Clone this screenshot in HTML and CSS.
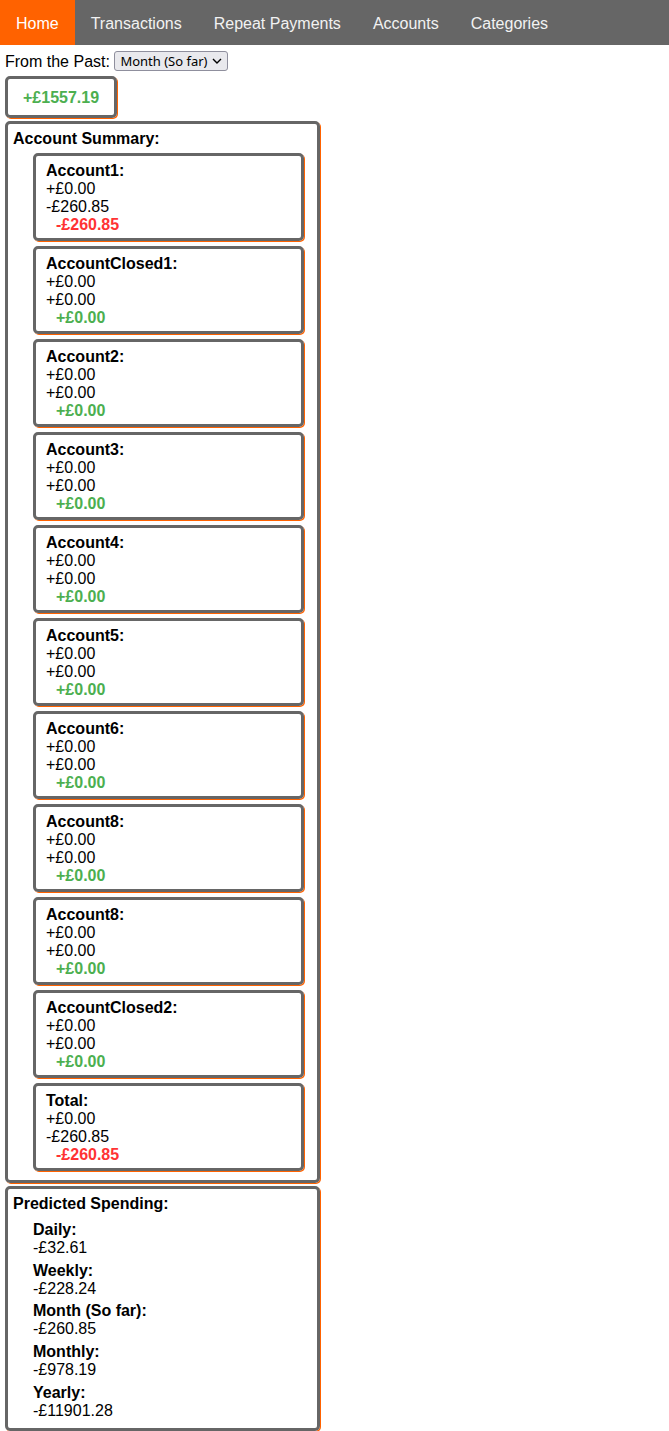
FILE: index.html
```html
<!DOCTYPE html>
<html lang="en">
<head>
<meta charset="utf-8">
<title>Home</title>
<link rel="stylesheet" href="styles.css">
</head>
<body>
<nav class="topnav">
  <a class="nav-item active" href="#">Home</a>
  <a class="nav-item" href="#">Transactions</a>
  <a class="nav-item" href="#">Repeat Payments</a>
  <a class="nav-item" href="#">Accounts</a>
  <a class="nav-item" href="#">Categories</a>
</nav>
<main class="content">
  <div class="filter">From the Past: <span class="select-wrap"><select class="period"><option>Month (So far)</option></select><svg class="chevron" width="10" height="6" viewBox="0 0 10 6"><path d="M1 1l4 4 4-4" fill="none" stroke="#000" stroke-width="1.4"/></svg></span></div>
  <div class="card total-card"><span class="pos">+£1557.19</span></div>

  <section class="card panel">
    <div class="panel-title">Account Summary:</div>
    <ul class="accounts">
      <li class="card account"><div class="name">Account1:</div><div>+£0.00</div><div>-£260.85</div><div class="net neg">-£260.85</div></li>
      <li class="card account"><div class="name">AccountClosed1:</div><div>+£0.00</div><div>+£0.00</div><div class="net pos">+£0.00</div></li>
      <li class="card account"><div class="name">Account2:</div><div>+£0.00</div><div>+£0.00</div><div class="net pos">+£0.00</div></li>
      <li class="card account"><div class="name">Account3:</div><div>+£0.00</div><div>+£0.00</div><div class="net pos">+£0.00</div></li>
      <li class="card account"><div class="name">Account4:</div><div>+£0.00</div><div>+£0.00</div><div class="net pos">+£0.00</div></li>
      <li class="card account"><div class="name">Account5:</div><div>+£0.00</div><div>+£0.00</div><div class="net pos">+£0.00</div></li>
      <li class="card account"><div class="name">Account6:</div><div>+£0.00</div><div>+£0.00</div><div class="net pos">+£0.00</div></li>
      <li class="card account"><div class="name">Account8:</div><div>+£0.00</div><div>+£0.00</div><div class="net pos">+£0.00</div></li>
      <li class="card account"><div class="name">Account8:</div><div>+£0.00</div><div>+£0.00</div><div class="net pos">+£0.00</div></li>
      <li class="card account"><div class="name">AccountClosed2:</div><div>+£0.00</div><div>+£0.00</div><div class="net pos">+£0.00</div></li>
      <li class="card account"><div class="name">Total:</div><div>+£0.00</div><div>-£260.85</div><div class="net neg">-£260.85</div></li>
    </ul>
  </section>

  <section class="card panel predicted">
    <div class="panel-title">Predicted Spending:</div>
    <ul class="predictions">
      <li><div class="name">Daily:</div><div>-£32.61</div></li>
      <li><div class="name">Weekly:</div><div>-£228.24</div></li>
      <li><div class="name">Month (So far):</div><div>-£260.85</div></li>
      <li><div class="name">Monthly:</div><div>-£978.19</div></li>
      <li><div class="name">Yearly:</div><div>-£11901.28</div></li>
    </ul>
  </section>
</main>
</body>
</html>
```

FILE: styles.css
```css
* { box-sizing: border-box; }

body {
  margin: 0;
  font-family: "Liberation Sans", Arial, sans-serif;
  font-size: 16px;
  color: #000;
  background: #fff;
}

.topnav {
  display: flex;
  background: #666;
  height: 45px;
}

.nav-item {
  display: block;
  padding: 15px 16px 13px;
  line-height: 17px;
  color: #f2f2f2;
  text-decoration: none;
  font-size: 16px;
}

.nav-item.active {
  background: #ff6200;
  color: #fff;
}

.content {
  padding: 0 5px;
}

.filter {
  padding-top: 6px;
  height: 31px;
}

.select-wrap {
  position: relative;
  display: inline-block;
  vertical-align: 1px;
}

.period {
  -webkit-appearance: none;
  appearance: none;
  font-family: "Noto Sans", "DejaVu Sans", sans-serif;
  font-size: 13px;
  line-height: 16px;
  height: 20px;
  width: 114px;
  padding: 0 0 0 5px;
  color: #000;
  background: #e9e9ed;
  border: 1px solid #8f8f9d;
  border-radius: 3px;
  display: block;
}

.chevron {
  position: absolute;
  right: 6px;
  top: 7px;
  pointer-events: none;
}

.card {
  border: 3px solid #666;
  border-radius: 5px;
  box-shadow: 1px 1px 0 #ff6200;
}

.total-card {
  display: inline-block;
  padding: 10px 15px 8px 15px;
  font-weight: bold;
}

.pos { color: #4caf50; }
.neg { color: #f33; }

.panel {
  width: 315px;
  margin-top: 3px;
  padding: 6px 5px 4px;
}

.panel-title {
  font-weight: bold;
}

.accounts,
.predictions {
  list-style: none;
  margin: 0;
  padding: 0 0 0 20px;
}

.accounts {
  padding-top: 5px;
}

.account {
  width: 271px;
  padding: 6px 10px 4px;
  margin-bottom: 5px;
}

.name {
  font-weight: bold;
}

.net {
  font-weight: bold;
  padding-left: 10px;
}

.predictions {
  padding-top: 3px;
}

.predictions li {
  margin-top: 4.75px;
}

.predicted {
  padding-bottom: 8px;
}
```
